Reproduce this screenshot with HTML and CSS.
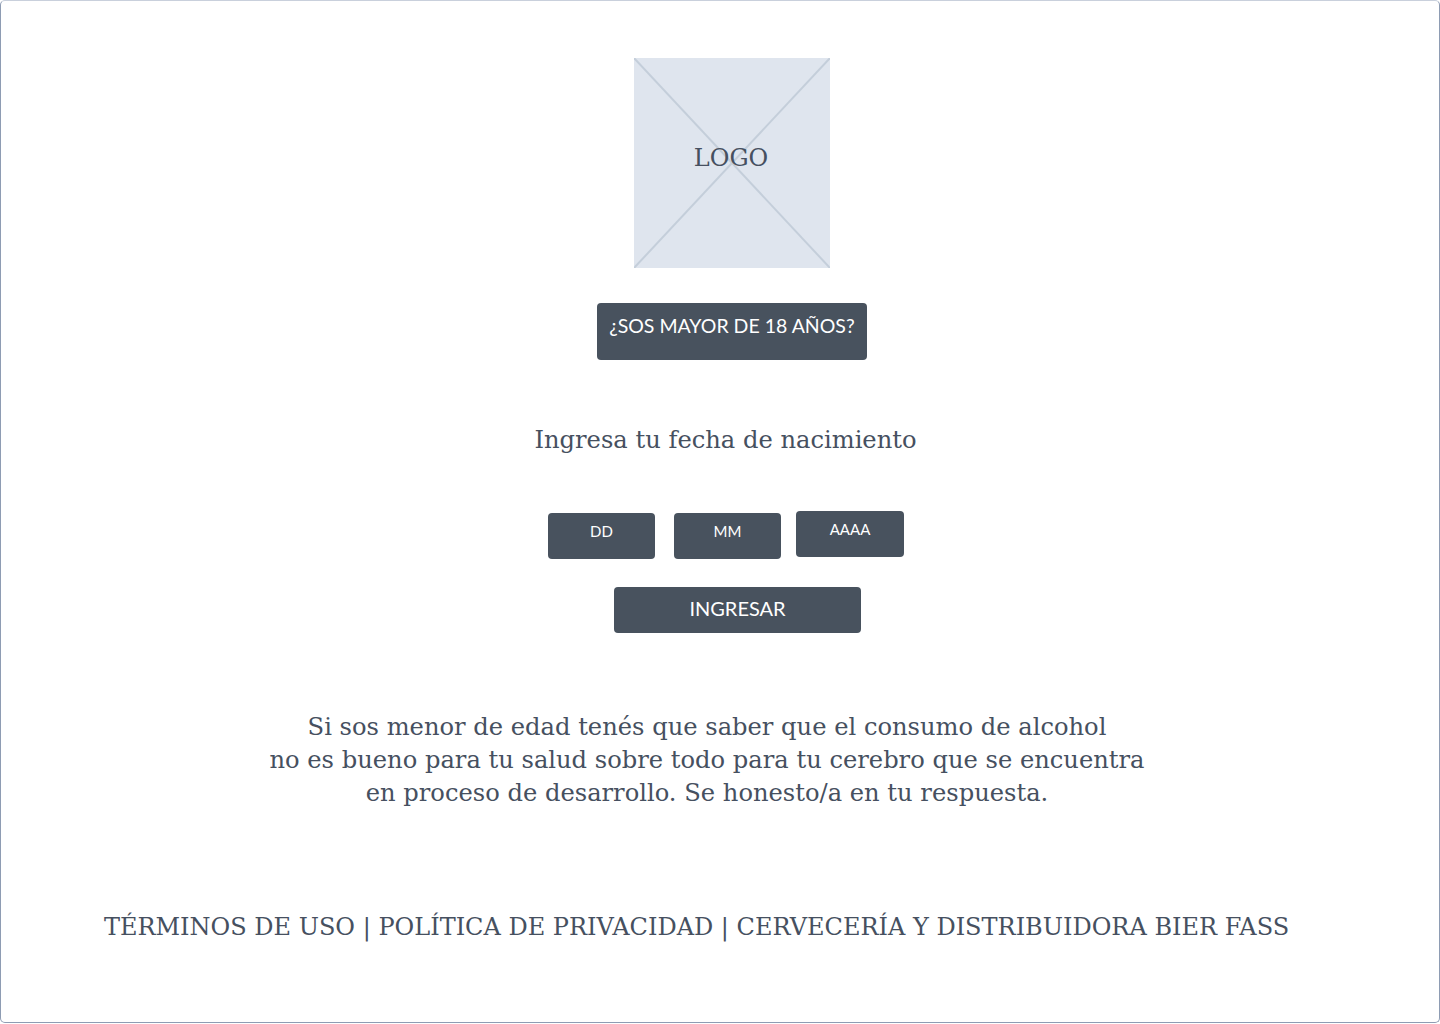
FILE: index.html
```html
<!DOCTYPE html>
<html lang="es">
<head>
<meta charset="utf-8">
<title>Verificación de edad</title>
<link rel="stylesheet" href="styles.css">
</head>
<body>
<div class="frame">
  <div class="logo">
    <svg class="logo-x" viewBox="0 0 196 210" preserveAspectRatio="none" width="196" height="210">
      <line x1="0" y1="0" x2="196" y2="210" stroke="#c4ceda" stroke-width="2"/>
      <line x1="196" y1="0" x2="0" y2="210" stroke="#c4ceda" stroke-width="2"/>
    </svg>
    <span class="logo-text">LOGO</span>
  </div>
  <div class="btn btn-age">¿SOS MAYOR DE 18 AÑOS?</div>
  <p class="prompt">Ingresa tu fecha de nacimiento</p>
  <div class="date-row">
    <div class="btn btn-date">DD</div>
    <div class="btn btn-date">MM</div>
    <div class="btn btn-date btn-year">AAAA</div>
  </div>
  <div class="btn btn-submit">INGRESAR</div>
  <p class="warning">Si sos menor de edad tenés que saber que el consumo de alcohol<br>no es bueno para tu salud sobre todo para tu cerebro que se encuentra<br>en proceso de desarrollo. Se honesto/a en tu respuesta.</p>
  <p class="footer">TÉRMINOS DE USO | POLÍTICA DE PRIVACIDAD | CERVECERÍA Y DISTRIBUIDORA BIER FASS</p>
</div>
</body>
</html>
```
FILE: styles.css
```css
* { box-sizing: border-box; }
html, body { margin: 0; padding: 0; background: #ffffff; }
body { width: 1440px; height: 1024px; overflow: hidden; }
.frame {
  width: 1440px;
  height: 1023px;
  border: 1px solid #8e9cb3;
  border-top-color: #c9d0dc;
  border-radius: 5px;
  display: flex;
  flex-direction: column;
  align-items: center;
  padding-top: 57px;
  color: #465060;
}
.logo {
  position: relative;
  width: 196px;
  height: 210px;
  background: #dfe5ee;
  margin-left: 24px;
  display: flex;
  align-items: center;
  justify-content: center;
}
.logo-x { position: absolute; left: 0; top: 0; }
.logo-text {
  position: relative;
  font-family: "DejaVu Serif", serif;
  font-size: 24px;
  margin-top: -10px;
  margin-left: -2px;
  color: #465060;
}
.btn {
  background: #48525e;
  color: #ffffff;
  border-radius: 4px;
  font-family: Lato, sans-serif;
  display: flex;
  justify-content: center;
}
.btn-age {
  width: 270px;
  height: 57px;
  margin-top: 35px;
  margin-left: 24px;
  font-size: 19.5px;
  padding-top: 11px;
}
.prompt {
  font-family: "DejaVu Serif", serif;
  font-size: 24.2px;
  margin: 65px 0 0 11px;
  line-height: 30px;
}
.date-row {
  display: flex;
  align-items: flex-start;
  margin-top: 56px;
  margin-left: 12px;
}
.btn-date {
  width: 107px;
  height: 46px;
  font-size: 15px;
  padding-top: 9px;
  margin-top: 2px;
}
.btn-date + .btn-date { margin-left: 19px; }
.btn-year { margin-top: 0; margin-left: 15px !important; width: 108px; }
.btn-submit {
  width: 247px;
  height: 46px;
  margin-top: 28px;
  margin-left: 35px;
  font-size: 20px;
  padding-top: 9px;
}
.warning {
  font-family: "DejaVu Serif", serif;
  font-size: 24.2px;
  line-height: 33px;
  text-align: center;
  margin: 78px 0 0 -26px;
}
.footer {
  font-family: "DejaVu Serif", serif;
  font-size: 24px;
  margin: 102px 0 0 -47px;
  line-height: 30px;
}
```
